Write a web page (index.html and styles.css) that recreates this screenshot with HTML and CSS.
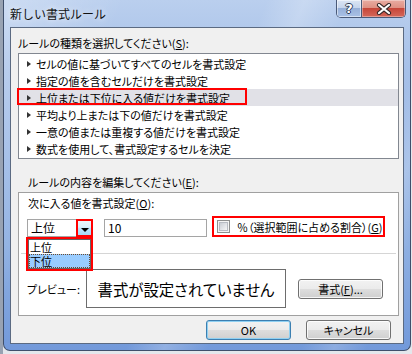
FILE: index.html
```html
<!DOCTYPE html>
<html lang="ja">
<head>
<meta charset="utf-8">
<title>新しい書式ルール</title>
<link rel="stylesheet" href="styles.css">
</head>
<body>
<div class="desk">
  <div class="window">
    <div class="titlebar">
      <span class="title">新しい書式ルール</span>
      <div class="caption-btns">
        <div class="cbtn help"><span class="q">?</span></div>
        <div class="cbtn close">
          <svg width="16" height="12" viewBox="0 0 16 12">
            <path d="M3 2 L13 10 M13 2 L3 10" stroke="#3a2a2a" stroke-width="4.2" stroke-linecap="round"/>
            <path d="M3 2 L13 10 M13 2 L3 10" stroke="#ffffff" stroke-width="2.2" stroke-linecap="round"/>
          </svg>
        </div>
      </div>
    </div>
    <div class="client">
      <div class="label l1">ルールの種類を選択してください(<u>S</u>):</div>
      <ul class="rules">
        <li><i class="tri"></i>セルの値に基づいてすべてのセルを書式設定</li>
        <li><i class="tri"></i>指定の値を含むセルだけを書式設定</li>
        <li class="sel"><i class="tri"></i>上位または下位に入る値だけを書式設定<span class="mark-row"></span></li>
        <li><i class="tri"></i>平均より上または下の値だけを書式設定</li>
        <li><i class="tri"></i>一意の値または重複する値だけを書式設定</li>
        <li><i class="tri"></i>数式を使用して、書式設定するセルを決定</li>
      </ul>
      <div class="label l2">ルールの内容を編集してください(<u>E</u>):</div>
      <div class="editbox">
        <div class="label l3">次に入る値を書式設定(<u>O</u>):</div>
        <div class="controls">
          <div class="combo">
            <span class="combo-text">上位</span>
            <span class="combo-btn"><i class="arrow"></i></span>
            <div class="droplist">
              <div class="dl-in">
                <div class="opt">上位</div>
                <div class="opt on">下位</div>
              </div>
            </div>
          </div>
          <div class="textbox">10</div>
          <div class="check">
            <span class="box"><span class="box-in"></span></span>
            <span class="check-label">％（選択範囲に占める割合）(<u>G</u>)</span>
          </div>
        </div>
        <div class="sep"></div>
        <div class="preview-row">
          <span class="plabel">プレビュー:</span>
          <div class="preview">書式が設定されていません</div>
          <button class="btn fmt">書式(<u>F</u>)...</button>
        </div>
      </div>
      <div class="actions">
        <button class="btn default">OK</button>
        <button class="btn">キャンセル</button>
      </div>
    </div>
  </div>
</div>
</body>
</html>
```
FILE: styles.css
```css
* { box-sizing: border-box; }
html, body { margin: 0; padding: 0; }
body {
  width: 412px;
  height: 354px;
  overflow: hidden;
  background: #e4e7ec;
  font-family: "Noto Sans CJK JP", "Noto Sans", sans-serif;
  font-size: 11px;
  color: #000;
  font-feature-settings: "palt";
}
.desk {
  height: 354px;
  background:
    linear-gradient(90deg, #98a2b2 0, #98a2b2 3px, transparent 3px),
    #e4e7ec;
}
.window {
  margin-left: 3px;
  width: 408px;
  height: 351px;
  padding: 0 6px 6px;
  border: 1px solid #3f4f6b;
  border-top: 0;
  border-radius: 0 0 7px 7px;
  background:
    linear-gradient(112deg, rgba(255,255,255,0.28) 0%, rgba(255,255,255,0) 22%, rgba(255,255,255,0) 48%, rgba(255,255,255,0.22) 55%, rgba(255,255,255,0) 63%, rgba(255,255,255,0) 80%, rgba(255,255,255,0.18) 86%, rgba(255,255,255,0) 92%),
    linear-gradient(180deg, #bacfee 0%, #a6c0e8 20%, #8fb0e2 70%, #7299da 100%);
  display: flex;
  flex-direction: column;
}
.titlebar {
  height: 27px;
  display: flex;
  align-items: flex-start;
  flex: none;
}
.title {
  margin-top: 5px;
  line-height: 17px;
  font-size: 12px;
  font-feature-settings: normal;
  color: #111;
  text-shadow: 0 0 6px rgba(255,255,255,0.9);
}
.caption-btns {
  margin-left: auto;
  margin-right: -2px;
  display: flex;
  height: 18px;
  border: 1px solid #4a5a78;
  border-top: 0;
  border-radius: 0 0 5px 5px;
  overflow: hidden;
}
.cbtn {
  height: 17px;
  display: flex;
  align-items: center;
  justify-content: center;
}
.help {
  width: 25px;
  border-right: 1px solid #4a5a78;
  background: linear-gradient(180deg, #dbe5f4 0%, #c6d5ec 45%, #97b0d8 50%, #a9c1e6 100%);
  box-shadow: inset 0 0 0 1px rgba(255,255,255,0.5);
}
.q {
  font-family: "DejaVu Sans", sans-serif;
  font-weight: bold;
  font-size: 13px;
  line-height: 13px;
  color: #fff;
  text-shadow: -1px 0 #2c3a55, 1px 0 #2c3a55, 0 -1px #2c3a55, 0 1px #2c3a55;
}
.close {
  width: 43px;
  background: linear-gradient(180deg, #e9aca2 0%, #df9184 45%, #c7473a 50%, #d4685a 100%);
  box-shadow: inset 0 0 0 1px rgba(255,255,255,0.35);
}
.client {
  flex: none;
  height: 317px;
  background: #f0f0f0;
  border: 1px solid #5b6a82;
  padding: 0 4px 0 7px;
}
.label {
  line-height: 15px;
  height: 15px;
  white-space: nowrap;
}
.l1 { margin-top: 8px; }
.rules {
  list-style: none;
  margin: 2px 0 0;
  padding: 1px 0;
  height: 106px;
  border: 1px solid #828790;
  background: #fff;
}
.rules li {
  position: relative;
  height: 17px;
  display: flex;
  align-items: center;
  padding-left: 8px;
  white-space: nowrap;
}
.rules li.sel { background: #e1e1e7; }
.tri {
  width: 0;
  height: 0;
  border-left: 4px solid #333;
  border-top: 3px solid transparent;
  border-bottom: 3px solid transparent;
  margin-right: 5px;
}
.mark-row {
  position: absolute;
  left: -2px;
  top: -1px;
  width: 230px;
  height: 17px;
  border: 2px solid #ff0000;
}
.l2 { margin-top: 16px; margin-left: 10px; }
.editbox {
  margin-top: 2px;
  height: 124px;
  border: 1px solid #a0a0a0;
  background: #fff;
  padding: 3px 8px 0;
}
.l3 { margin-left: 1px; }
.controls {
  margin-top: 5px;
  height: 21px;
  display: flex;
  align-items: flex-start;
}
.combo {
  position: relative;
  margin-top: 3px;
  width: 66px;
  height: 18px;
  display: flex;
}
.combo-text {
  flex: 1;
  border: 1px solid #a5a5a5;
  border-right: 0;
  line-height: 16px;
  padding-left: 3px;
  font-size: 12px;
}
.combo-btn {
  width: 17px;
  height: 18px;
  border: 2px solid #ff0000;
  background: linear-gradient(180deg, #eaf6fd 0%, #d9f0fc 45%, #bee6fd 50%, #a7d9f5 100%);
  display: flex;
  align-items: center;
  justify-content: center;
}
.arrow {
  width: 0;
  height: 0;
  margin-top: 3px;
  border-top: 4px solid #000;
  border-left: 4px solid transparent;
  border-right: 4px solid transparent;
}
.droplist {
  position: absolute;
  top: 100%;
  left: -1px;
  width: 67px;
  height: 34px;
  border: 2px solid #ff0000;
  background: #fff;
  z-index: 2;
}
.dl-in {
  height: 30px;
  border: 1px solid #646464;
  overflow: hidden;
}
.opt {
  height: 14px;
  line-height: 14px;
  padding-left: 1px;
  font-size: 11px;
}
.opt.on {
  background: #99ccff;
  outline: 1px dotted #6b4a2e;
  outline-offset: -1px;
}
.textbox {
  margin-top: 3px;
  margin-left: 11px;
  width: 103px;
  height: 18px;
  border: 1px solid #a5a5a5;
  line-height: 16px;
  padding-left: 3px;
  font-size: 12px;
}
.check {
  margin-left: 5px;
  width: 173px;
  height: 21px;
  border: 2px solid #ff0000;
  display: flex;
  align-items: center;
  padding-left: 3px;
  white-space: nowrap;
}
.box {
  width: 13px;
  height: 13px;
  border: 1px solid #8e8f8f;
  background: #f4f4f4;
  padding: 1px;
  flex: none;
}
.box-in {
  display: block;
  width: 9px;
  height: 9px;
  border: 1px solid #b8bcc4;
  background: linear-gradient(135deg, #c9cdd4 0%, #e4e6ea 60%, #f6f6f6 100%);
}
.check-label { margin-left: 7px; }
.sep {
  margin: 16px -6px 0;
  height: 1px;
  background: #d5d5d5;
}
.preview-row {
  margin-top: 15px;
  display: flex;
  align-items: center;
}
.plabel {
  width: 59px;
  flex: none;
  white-space: nowrap;
}
.preview {
  width: 200px;
  height: 39px;
  border: 1px solid #6d6d6d;
  background: #fff;
  font-size: 15.4px;
  display: flex;
  align-items: center;
  justify-content: center;
  white-space: nowrap;
}
.btn {
  width: 85px;
  height: 20px;
  padding: 0;
  border: 1px solid #707070;
  border-radius: 3px;
  background: linear-gradient(180deg, #f2f2f2 0%, #ebebeb 48%, #dddddd 52%, #cfcfcf 100%);
  box-shadow: inset 0 0 0 1px rgba(255,255,255,0.8);
  font-family: inherit;
  font-size: 11px;
  font-feature-settings: "palt";
  line-height: 16px;
  color: #000;
}
.fmt { margin-left: 12px; }
.btn.default {
  border-color: #3c7fb1;
  box-shadow: inset 0 0 0 1px #8fd0f2;
}
.actions {
  margin-top: 4px;
  display: flex;
  justify-content: flex-end;
  gap: 15px;
  padding-right: 8px;
}
```
